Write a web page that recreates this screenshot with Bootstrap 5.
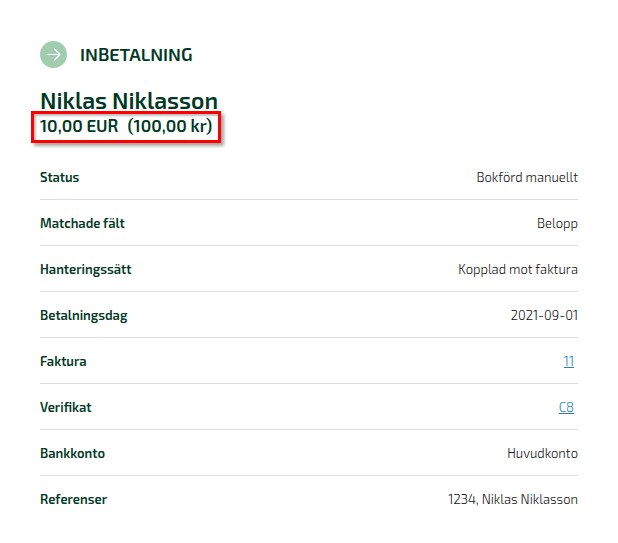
<!DOCTYPE html>
<html lang="sv">
<head>
<meta charset="utf-8">
<meta name="viewport" content="width=device-width, initial-scale=1">
<title>Inbetalning</title>
<link href="https://cdn.jsdelivr.net/npm/bootstrap@5.3.0/dist/css/bootstrap.min.css" rel="stylesheet">
<style>
  body { font-family: "Exo 2", "Noto Sans", sans-serif; font-size: 13px; line-height: 20px; color: #111; background: #fff; }
  .payment { padding: 40px; }
  .payment-kind { font-size: 18px; line-height: 28px; font-weight: 600; color: #003824; }
  .payer { font-size: 23px; line-height: 24px; font-weight: 600; color: #003824; margin-top: 20px; }
  .amount { border: 3px solid #f00; box-shadow: 3px 3px 3px rgba(0, 0, 0, .35), inset 2px 2px 2px rgba(0, 0, 0, .25); font-size: 17px; line-height: 22px; font-weight: 600; color: #003824; margin: -1px 0 0 -9px; padding: 0 6px 4px 6px; column-gap: 9px; }
  .details { margin: 10px 0 0; color: #111; }
  .details th, .details td { height: 46px; padding: 2px 0 0; vertical-align: middle; background: none; color: inherit; border-bottom: 1px solid #ddd; }
  .details td { font-weight: 300; }
  .details th { font-weight: 600; color: #003824; }
  .details tr:last-child > * { border-bottom: 0; }
  .details a { color: #2a7fba; margin-right: 4px; }
</style>
</head>
<body>
<main class="payment container-fluid">
  <header>
    <div class="d-flex align-items-center">
      <svg class="flex-shrink-0" width="28" height="28" viewBox="0 0 28 28" aria-hidden="true">
        <circle cx="13.5" cy="14.5" r="13.5" fill="#a0cdb0"/>
        <path d="M7 14.5H20M14.5 9l5.5 5.5-5.5 5.5" fill="none" stroke="#fff" stroke-width="1.2" stroke-linecap="round" stroke-linejoin="round"/>
      </svg>
      <h1 class="payment-kind text-uppercase mb-0 ms-2 ps-1">Inbetalning</h1>
    </div>
    <h2 class="payer mb-0">Niklas Niklasson</h2>
    <p class="amount d-inline-flex"><span>10,00 EUR</span> <span>(100,00 kr)</span></p>
  </header>
  <table class="details table table-borderless">
    <tbody>
      <tr><th scope="row">Status</th><td class="text-end">Bokförd manuellt</td></tr>
      <tr><th scope="row">Matchade fält</th><td class="text-end">Belopp</td></tr>
      <tr><th scope="row">Hanteringssätt</th><td class="text-end">Kopplad mot faktura</td></tr>
      <tr><th scope="row">Betalningsdag</th><td class="text-end">2021-09-01</td></tr>
      <tr><th scope="row">Faktura</th><td class="text-end"><a href="#">11</a></td></tr>
      <tr><th scope="row">Verifikat</th><td class="text-end"><a href="#">C8</a></td></tr>
      <tr><th scope="row">Bankkonto</th><td class="text-end">Huvudkonto</td></tr>
      <tr><th scope="row">Referenser</th><td class="text-end">1234, Niklas Niklasson</td></tr>
    </tbody>
  </table>
</main>
</body>
</html>
